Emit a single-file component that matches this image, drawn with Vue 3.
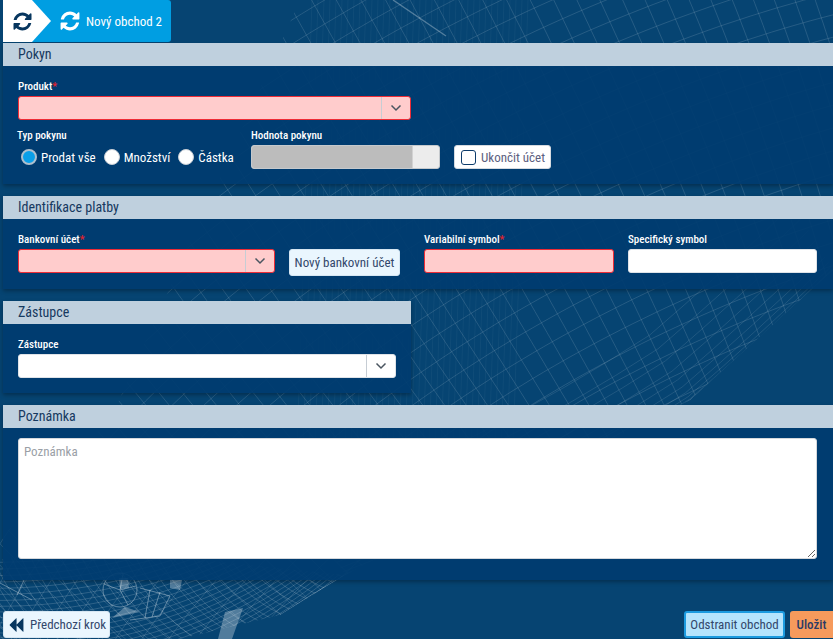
<template>
  <div class="page">
    <svg class="mesh" width="833" height="639" viewBox="0 0 833 639">
      <defs>
        <clipPath id="globe-clip">
          <polygon points="300,0 833,0 833,270 690,400 345,575 280,615 180,639 0,639 0,540 60,470 110,420" />
        </clipPath>
        <clipPath id="hull-clip">
          <polygon points="0,560 60,545 345,575 280,615 180,639 0,639" />
        </clipPath>
      </defs>
      <g clip-path="url(#globe-clip)">
        <path :d="meshPath" class="mesh-line" />
        <path :d="columnsPath" class="mesh-line mesh-columns" />
        <path :d="edgePath" class="mesh-line mesh-rim" />
        <path d="M833 270 Q760 340 690 400 Q520 510 345 575 Q310 595 280 615" class="mesh-edge" />
        <path d="M393 0 L446 36" class="mesh-bar" />
      </g>
      <g clip-path="url(#hull-clip)">
        <path :d="hullPath" class="mesh-line mesh-hull" />
      </g>
      <g class="boat">
        <circle cx="120" cy="590" r="17" />
        <path d="M120 590 L104 584 M120 590 L136 586 M120 590 L128 605 M120 590 L123 574 M0 583 L32 600 M24 580 L17 595" />
        <path class="boat-fill" d="M119 578 L128 578 L129 588 L120 589 Z M170 580 L182 580 L180 590 L170 588 Z M225 612 L243 608 L232 639 L218 639 Z M125 607 L140 612 L112 618 Z" />
        <path d="M140 588 L170 596 L160 616 L130 620 M150 590 L145 618 M160 592 L152 617" />
      </g>
    </svg>

    <div class="tabs">
      <div class="tab-home">
        <svg class="tab-icon" viewBox="0 0 1792 1792"><path :d="refreshIcon" fill="#07365f" /></svg>
      </div>
      <div class="tab-current">
        <svg class="tab-icon-big" viewBox="0 0 1792 1792"><path :d="refreshIcon" fill="#fff" /></svg>
        <span>Nový obchod 2</span>
      </div>
    </div>

    <section class="panel">
      <h2 class="panel-title">Pokyn</h2>
      <div class="panel-body">
        <div class="field field-product">
          <label>Produkt<i>*</i></label>
          <div class="combo invalid">
            <span class="combo-value"></span>
            <span class="combo-arrow"><svg viewBox="0 0 12 8"><path d="M1.5 1.5 L6 6 L10.5 1.5" /></svg></span>
          </div>
        </div>
        <div class="order-row">
          <div class="field field-type">
            <label>Typ pokynu</label>
            <div class="radios">
              <span v-for="r in orderTypes" :key="r.label" class="radio-item">
                <span class="radio" :class="{ checked: r.checked }"></span>{{ r.label }}
              </span>
            </div>
          </div>
          <div class="field field-value">
            <label>Hodnota pokynu</label>
            <div class="slider"><span class="slider-fill"></span></div>
          </div>
          <button class="btn-check"><span class="checkbox"></span>Ukončit účet</button>
        </div>
      </div>
    </section>

    <section class="panel">
      <h2 class="panel-title">Identifikace platby</h2>
      <div class="panel-body payment-row">
        <div class="field field-account">
          <label>Bankovní účet<i>*</i></label>
          <div class="combo invalid">
            <span class="combo-value"></span>
            <span class="combo-arrow"><svg viewBox="0 0 12 8"><path d="M1.5 1.5 L6 6 L10.5 1.5" /></svg></span>
          </div>
        </div>
        <button class="btn-light btn-account">Nový bankovní účet</button>
        <div class="field field-symbol">
          <label>Variabilní symbol<i>*</i></label>
          <input class="text invalid" type="text" />
        </div>
        <div class="field field-symbol">
          <label>Specifický symbol</label>
          <input class="text" type="text" />
        </div>
      </div>
    </section>

    <section class="panel panel-half">
      <h2 class="panel-title">Zástupce</h2>
      <div class="panel-body">
        <div class="field">
          <label>Zástupce</label>
          <div class="combo">
            <span class="combo-value"></span>
            <span class="combo-arrow"><svg viewBox="0 0 12 8"><path d="M1.5 1.5 L6 6 L10.5 1.5" /></svg></span>
          </div>
        </div>
      </div>
    </section>

    <section class="panel">
      <h2 class="panel-title">Poznámka</h2>
      <div class="panel-body note-body">
        <textarea class="note" placeholder="Poznámka"></textarea>
      </div>
    </section>

    <footer class="footer">
      <button class="btn-light btn-back">
        <svg viewBox="0 0 1792 1792"><path :d="backIcon" fill="#07365f" /></svg>
        Předchozí krok
      </button>
      <div class="footer-right">
        <button class="btn-remove">Odstranit obchod</button>
        <button class="btn-save">Uložit</button>
      </div>
    </footer>
  </div>
</template>

<script setup>
const refreshIcon =
  'M1639 1056q0 5-1 7-64 268-268 434.5t-478 166.5q-146 0-282.5-55t-243.5-157l-129 129q-19 19-45 19t-45-19-19-45v-448q0-26 19-45t45-19h448q26 0 45 19t19 45-19 45l-137 137q71 66 161 102t187 36q134 0 250-65t186-179q11-17 53-117 8-23 30-23h192q13 0 22.5 9.5t9.5 22.5zm25-800v448q0 26-19 45t-45 19h-448q-26 0-45-19t-19-45 19-45l138-138q-148-137-349-137-134 0-250 65t-186 179q-11 17-53 117-8 23-30 23h-199q-13 0-22.5-9.5t-9.5-22.5v-7q65-268 270-434.5t480-166.5q146 0 284 55.5t245 156.5l130-129q19-19 45-19t45 19 19 45z'
const backIcon =
  'M1683 141q19-19 32-13t13 32v1472q0 26-13 32t-32-13l-710-710q-9-9-13-19v710q0 26-13 32t-32-13l-710-710q-19-19-19-45t19-45l710-710q19-19 32-13t13 32v710q4-10 13-19z'

const orderTypes = [
  { label: 'Prodat vše', checked: true },
  { label: 'Množství', checked: false },
  { label: 'Částka', checked: false },
]

// wireframe globe behind the form, lat/long grid projected onto a sphere
const buildMesh = (cx, cy, radius, angle, tilt, step) => {
  const rad = Math.PI / 180
  const e1 = [Math.cos(angle * rad), Math.sin(angle * rad), 0]
  const u = [Math.sin(angle * rad), -Math.cos(angle * rad), 0]
  const a = tilt * rad
  const n = [Math.cos(a) * e1[0], Math.cos(a) * e1[1], Math.sin(a)]
  const w = [
    n[1] * u[2] - n[2] * u[1],
    n[2] * u[0] - n[0] * u[2],
    n[0] * u[1] - n[1] * u[0],
  ]
  const point = (lat, lon) => {
    const cl = Math.cos(lat * rad)
    const sl = Math.sin(lat * rad)
    const co = Math.cos(lon * rad)
    const so = Math.sin(lon * rad)
    const v = [0, 1, 2].map((i) => sl * n[i] + cl * (co * u[i] + so * w[i]))
    return [cx + radius * v[0], cy + radius * v[1], v[2]]
  }
  let d = ''
  const trace = (fn) => {
    let pen = false
    for (let k = -180; k <= 180; k += 1) {
      const [x, y, z] = fn(k)
      const inside = z > 0 && x > -40 && x < 880 && y > -40 && y < 680
      if (inside) {
        d += `${pen ? 'L' : 'M'}${x.toFixed(1)} ${y.toFixed(1)}`
      }
      pen = inside
    }
  }
  for (let lat = -88; lat <= 88; lat += step) trace((k) => point(lat, k))
  for (let lon = -180; lon < 180; lon += step) trace((k) => point(k / 2, lon))
  return d
}
const meshPath = buildMesh(550, 250, 900, 62, 30, 1.4)
const hullPath = buildMesh(150, 200, 500, 20, 40, 1.2)

// the denser near-vertical strip around the middle of the picture
let columnsPath = ''
for (let x = 300; x <= 520; x += 6) {
  columnsPath += `M${x + 12} 0 L${x - 4} 480`
}

// lines crowding together towards the rim of the globe
let edgePath = ''
for (let i = 1; i <= 9; i += 1) {
  const dx = -0.5 * i * i
  const dy = -0.8 * i * i
  edgePath += `M${833 + dx} ${270 + dy} Q${760 + dx} ${340 + dy} ${690 + dx} ${400 + dy} Q${520 + dx} ${510 + dy} ${345 + dx} ${575 + dy}`
}
</script>

<style scoped>
.page {
  position: relative;
  width: 833px;
  height: 639px;
  overflow: hidden;
  background: #064472;
  display: flex;
  flex-direction: column;
  font-family: "Liberation Sans Narrow", "Roboto Condensed", Roboto, sans-serif;
  font-size: 13px;
  color: #fff;
  white-space: nowrap;
}

.mesh {
  position: absolute;
  left: 0;
  top: 0;
}

.mesh-line {
  fill: none;
  stroke: #fff;
  stroke-width: 0.6;
  opacity: 0.22;
}

.mesh-columns {
  opacity: 0.08;
}

.mesh-rim {
  opacity: 0.18;
}

.mesh-hull {
  opacity: 0.28;
}

.mesh-edge {
  fill: none;
  stroke: #fff;
  stroke-width: 1;
  opacity: 0.3;
}

.mesh-bar {
  fill: none;
  stroke: #fff;
  stroke-width: 1.4;
  opacity: 0.3;
}

.boat {
  fill: none;
  stroke: #fff;
  stroke-width: 1;
  stroke-opacity: 0.35;
}

.boat-fill {
  fill: #fff;
  fill-opacity: 0.3;
  stroke: none;
}

.tabs {
  position: relative;
  display: flex;
  height: 42px;
  margin-left: 3px;
  margin-bottom: 1px;
}

.tab-home {
  position: relative;
  z-index: 1;
  width: 48px;
  display: flex;
  align-items: center;
  padding-left: 9px;
  box-sizing: border-box;
  background: #fff;
  clip-path: polygon(0 0, 29px 0, 48px 21px, 29px 42px, 0 42px);
}

.tab-icon {
  width: 21px;
  height: 21px;
}

.tab-current {
  width: 140px;
  margin-left: -20px;
  padding-left: 28px;
  box-sizing: border-box;
  display: flex;
  align-items: center;
  gap: 5px;
  background: #009ee2;
  border-radius: 0 3px 3px 0;
}

.tab-icon-big {
  width: 22px;
  height: 22px;
}

.panel {
  position: relative;
  margin: 0 0 12px 3px;
  background: rgba(0, 60, 112, 0.92);
  box-shadow: 0 2px 4px rgba(0, 0, 0, 0.3);
}

.panel-half {
  width: 408px;
}

.panel-half .panel-body {
  padding-right: 15px;
}

.panel-title {
  margin: 0;
  height: 23px;
  line-height: 23px;
  padding-left: 15px;
  background: rgba(197, 213, 226, 0.97);
  color: #16395f;
  font-size: 14px;
  font-weight: 400;
}

.panel-body {
  padding: 13px 16px 15px 15px;
}

.field {
  display: flex;
  flex-direction: column;
}

.field label {
  height: 17px;
  line-height: 16px;
  font-size: 11px;
  font-weight: 500;
}

.field label i {
  color: #e8202a;
  font-style: normal;
}

.field-product {
  width: 393px;
  margin-bottom: 8px;
}

.combo {
  display: flex;
  height: 24px;
  box-sizing: border-box;
  background: #fff;
  border-radius: 3px;
  border: 1px solid #dfe3e8;
}

.combo.invalid {
  background: #ffcccc;
  border-color: #ee2c36;
}

.combo-value {
  flex: 1;
}

.combo-arrow {
  width: 28px;
  display: flex;
  align-items: center;
  justify-content: center;
  border-left: 1px solid #c6cdd4;
}

.combo-arrow svg {
  width: 12px;
  height: 8px;
  fill: none;
  stroke: #4a5560;
  stroke-width: 1.5;
}

.order-row {
  display: flex;
  align-items: flex-end;
}

.field-type {
  width: 234px;
  margin-left: -1px;
}

.radios {
  height: 24px;
  display: flex;
  align-items: center;
  padding-left: 4px;
}

.radio-item {
  display: flex;
  align-items: center;
  gap: 4px;
  margin-right: 8px;
}

.radio {
  width: 16px;
  height: 16px;
  box-sizing: border-box;
  border-radius: 50%;
  background: #fff;
  border: 1px solid #c9cfd6;
}

.radio.checked {
  background: #0a9fe8;
  border: 2px solid #aebfcd;
}

.field-value {
  width: 189px;
}

.slider {
  height: 24px;
  border-radius: 3px;
  background: #ececec;
  border: 1px solid #c5c9cd;
  box-sizing: border-box;
  overflow: hidden;
}

.slider-fill {
  display: block;
  width: 160px;
  height: 100%;
  background: #bcbcbc;
  border-right: 1px solid #d2d2d2;
}

.btn-check {
  width: 97px;
  height: 24px;
  margin-left: 14px;
  padding: 0 0 0 6px;
  display: flex;
  align-items: center;
  gap: 5px;
  border: 1px solid #d5dae0;
  border-radius: 3px;
  background: #fff;
  color: #5c6080;
  font: inherit;
}

.checkbox {
  width: 15px;
  height: 15px;
  box-sizing: border-box;
  border: 1px solid #0d3c6b;
  border-radius: 3px;
  background: #fff;
}

.payment-row {
  display: flex;
  align-items: flex-start;
  padding-bottom: 13px;
}

.field-account {
  width: 257px;
}

.btn-light {
  border: 1px solid #d6e6f2;
  border-radius: 3px;
  background: #eaf6fe;
  color: #33476b;
  font: inherit;
}

.btn-account {
  width: 111px;
  height: 27px;
  margin: 17px 24px 0 14px;
  padding: 0;
}

.field-symbol {
  width: 190px;
}

.field-symbol + .field-symbol {
  width: 189px;
  margin-left: 14px;
}

.text {
  height: 24px;
  box-sizing: border-box;
  border: 1px solid #dfe3e8;
  border-radius: 3px;
  background: #fff;
  outline: none;
}

.text.invalid {
  background: #ffcccc;
  border-color: #ee2c36;
}

.note-body {
  padding-top: 10px;
  padding-bottom: 21px;
}

.note {
  display: block;
  width: 100%;
  height: 121px;
  box-sizing: border-box;
  padding: 5px;
  border: 1px solid #d5d8dc;
  border-radius: 3px;
  background: #fff;
  outline: none;
  font: inherit;
}

.note::placeholder {
  color: #9a9fa6;
}

.footer {
  position: relative;
  margin-top: auto;
  margin-bottom: 1px;
  margin-left: 3px;
  display: flex;
  justify-content: space-between;
  align-items: flex-end;
}

.btn-back {
  width: 107px;
  height: 27px;
  padding: 0 0 0 4px;
  display: flex;
  align-items: center;
  gap: 6px;
}

.btn-back svg {
  flex-shrink: 0;
  width: 16px;
  height: 16px;
}

.footer-right {
  display: flex;
  gap: 5px;
}

.btn-remove {
  width: 101px;
  height: 27px;
  padding: 0;
  border: 2px solid #1c9be0;
  border-radius: 3px;
  background: #b5e4fd;
  color: #33476b;
  font: inherit;
}

.btn-save {
  width: 43px;
  height: 27px;
  padding: 0;
  border: none;
  border-radius: 3px 0 0 3px;
  background: #f69a5c;
  color: #2c3a66;
  font: inherit;
  font-weight: 500;
}
</style>
